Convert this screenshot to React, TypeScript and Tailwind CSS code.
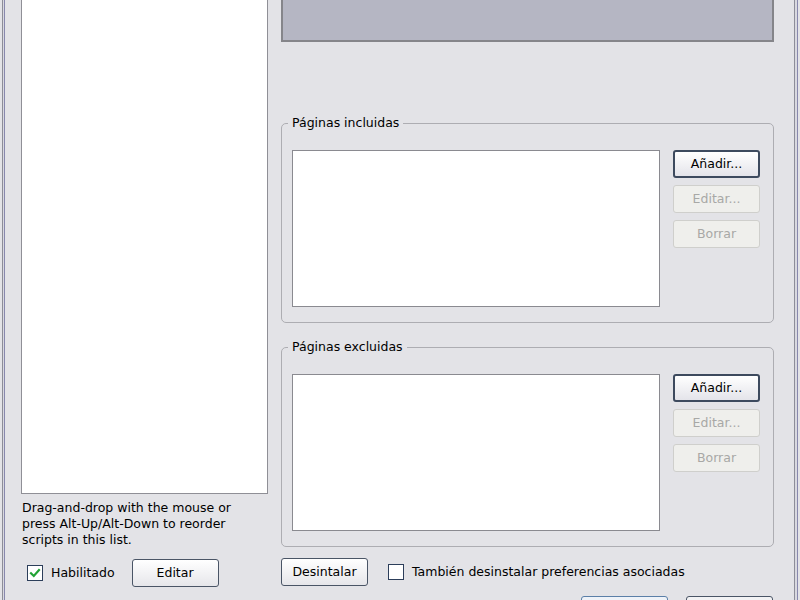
import React from "react";

function Btn({
  label,
  variant = "normal",
  className = "",
}: {
  label: string;
  variant?: "normal" | "default" | "disabled";
  className?: string;
}) {
  const base =
    "w-[87px] h-[28px] shrink-0 flex items-center justify-center rounded-[3px] text-[12.5px] leading-none";
  if (variant === "disabled") {
    return (
      <div
        className={`${base} border border-[#cfcfcc] bg-[#efefec] text-[#a8a8a6] ${className}`}
      >
        {label}
      </div>
    );
  }
  if (variant === "default") {
    return (
      <div
        className={`${base} border-2 border-[#3d4a5e] bg-gradient-to-b from-[#ffffff] to-[#e4e4ea] text-black ${className}`}
      >
        {label}
      </div>
    );
  }
  return (
    <div
      className={`${base} border border-[#4a5566] bg-gradient-to-b from-[#ffffff] to-[#e6e6ea] text-black ${className}`}
    >
      {label}
    </div>
  );
}

function Group({ title, className = "" }: { title: string; className?: string }) {
  return (
    <fieldset
      className={`shrink-0 border border-[#adadb2] rounded-[5px] pl-[6px] pr-[13px] pt-[19px] pb-[15px] m-0 min-w-0 ${className}`}
    >
      <legend className="px-[4px] leading-[16px] text-[12.5px] text-black">{title}</legend>
      <div className="flex ml-[4px]">
        <div className="w-[368px] h-[157px] bg-white border border-[#8a8a90]" />
        <div className="flex flex-col gap-[7px] ml-[13px]">
          <Btn label="Añadir..." variant="default" />
          <Btn label="Editar..." variant="disabled" />
          <Btn label="Borrar" variant="disabled" />
        </div>
      </div>
    </fieldset>
  );
}

function CheckBox({ checked }: { checked: boolean }) {
  return (
    <div className="w-[16px] h-[16px] shrink-0 border border-[#2c3e5a] bg-white flex items-center justify-center">
      {checked && (
        <svg width="12" height="12" viewBox="0 0 12 12">
          <path
            d="M2 6.2 L4.8 9 L10 3"
            fill="none"
            stroke="#22a336"
            strokeWidth="2.2"
            strokeLinecap="square"
          />
        </svg>
      )}
    </div>
  );
}

export default function App() {
  return (
    <div
      className="w-[800px] h-[600px] overflow-hidden bg-[#e3e3e7] flex text-black text-[12.5px]"
      style={{ fontFamily: '"DejaVu Sans", Verdana, sans-serif' }}
    >
      {/* left window edge */}
      <div className="w-[21px] h-full flex shrink-0">
        <div className="w-[2px] h-full" />
        <div className="w-[1px] h-full bg-[#8d8d98]" />
        <div className="w-[1px] h-full bg-[#d9d9e0]" />
        <div className="w-[1px] h-full bg-[#8888ad]" />
      </div>

      {/* left column */}
      <div className="w-[247px] shrink-0 flex flex-col">
        <div className="shrink-0 h-[494px] bg-white border-x border-b border-[#8f8f96]" />
        <p className="shrink-0 mt-[6px] leading-[16px] pl-[1px] text-[12.5px]">
          Drag-and-drop with the mouse or
          <br />
          press Alt-Up/Alt-Down to reorder
          <br />
          scripts in this list.
        </p>
        <div className="shrink-0 mt-[11px] h-[28px] flex items-center">
          <div className="ml-[6px]">
            <CheckBox checked />
          </div>
          <span className="ml-[8px]">Habilitado</span>
          <Btn label="Editar" className="ml-[17px]" />
        </div>
      </div>

      <div className="w-[13px] shrink-0" />

      {/* right column */}
      <div className="w-[493px] shrink-0 flex flex-col">
        <div className="shrink-0 h-[42px] bg-[#b5b6c3] border-2 border-t-0 border-[#85858a]" />
        <Group title="Páginas incluidas" className="mt-[73px]" />
        <Group title="Páginas excluidas" className="mt-[16px]" />
        <div className="shrink-0 mt-[11px] h-[28px] flex items-center">
          <Btn label="Desintalar" />
          <div className="ml-[20px]">
            <CheckBox checked={false} />
          </div>
          <span className="ml-[8px]">También desinstalar preferencias asociadas</span>
        </div>
        <div className="shrink-0 mt-[10px] flex justify-end gap-[18px] pr-[1px]">
          <div className="w-[87px] h-[28px] rounded-[3px] border border-[#5b7fa8] bg-[#eef2f8]" />
          <div className="w-[87px] h-[28px] rounded-[3px] border border-[#4a5566] bg-[#f2f2f4]" />
        </div>
      </div>

      {/* right window edge */}
      <div className="w-[26px] h-full flex shrink-0">
        <div className="w-[20px] h-full" />
        <div className="w-[1px] h-full bg-[#8d8d98]" />
        <div className="w-[2px] h-full bg-[#d9d9e0]" />
        <div className="w-[1px] h-full bg-[#8888ad]" />
      </div>
    </div>
  );
}
